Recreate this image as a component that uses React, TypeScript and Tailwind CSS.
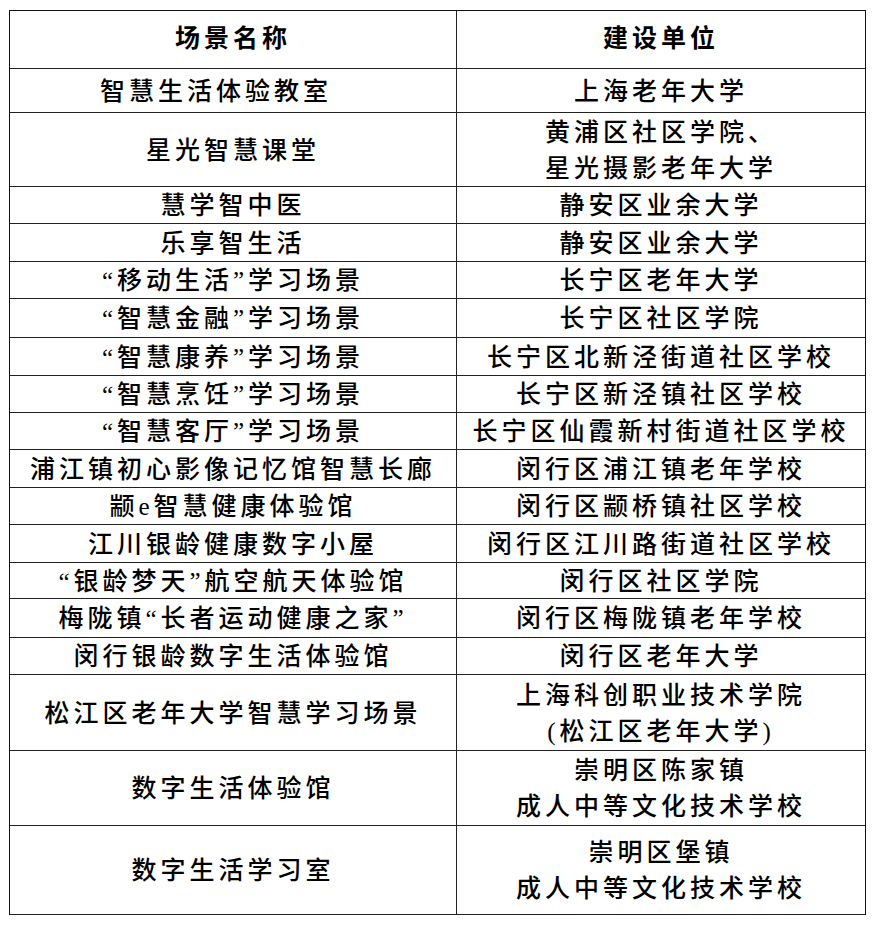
import React from "react";

interface Row {
  name: string;
  unit: string[];
  h: number;
  namePad?: string;
}

const rows: Row[] = [
  { name: "智慧生活体验教室", unit: ["上海老年大学"], h: 44, namePad: "pr-[34px]" },
  { name: "星光智慧课堂", unit: ["黄浦区社区学院、", "星光摄影老年大学"], h: 74 },
  { name: "慧学智中医", unit: ["静安区业余大学"], h: 37 },
  { name: "乐享智生活", unit: ["静安区业余大学"], h: 38 },
  { name: "“移动生活”学习场景", unit: ["长宁区老年大学"], h: 37 },
  { name: "“智慧金融”学习场景", unit: ["长宁区社区学院"], h: 39 },
  { name: "“智慧康养”学习场景", unit: ["长宁区北新泾街道社区学校"], h: 38 },
  { name: "“智慧烹饪”学习场景", unit: ["长宁区新泾镇社区学校"], h: 37 },
  { name: "“智慧客厅”学习场景", unit: ["长宁区仙霞新村街道社区学校"], h: 37 },
  { name: "浦江镇初心影像记忆馆智慧长廊", unit: ["闵行区浦江镇老年学校"], h: 38 },
  { name: "颛e智慧健康体验馆", unit: ["闵行区颛桥镇社区学校"], h: 37 },
  { name: "江川银龄健康数字小屋", unit: ["闵行区江川路街道社区学校"], h: 38 },
  { name: "“银龄梦天”航空航天体验馆", unit: ["闵行区社区学院"], h: 36 },
  { name: "梅陇镇“长者运动健康之家”", unit: ["闵行区梅陇镇老年学校"], h: 39 },
  { name: "闵行银龄数字生活体验馆", unit: ["闵行区老年大学"], h: 37 },
  { name: "松江区老年大学智慧学习场景", unit: ["上海科创职业技术学院", "(松江区老年大学)"], h: 76 },
  { name: "数字生活体验馆", unit: ["崇明区陈家镇", "成人中等文化技术学校"], h: 75 },
  { name: "数字生活学习室", unit: ["崇明区堡镇", "成人中等文化技术学校"], h: 89 },
];

const font = { fontFamily: '"Liberation Serif", "Noto Sans CJK SC", serif' };

export default function App() {
  return (
    <div className="w-[872px] h-[925px] bg-white pt-[10px] pl-[9px]" style={font}>
      <div className="w-[857px] border-t border-l border-r border-[#111] text-black text-[25px] tracking-[4px]">
        {/* header */}
        <div className="flex h-[58px] border-b border-[#222]">
          <div className="w-[447px] border-r border-[#222] flex items-center justify-center font-bold pb-[2px]">
            场景名称
          </div>
          <div className="flex-1 flex items-center justify-center font-bold pb-[2px]">
            建设单位
          </div>
        </div>

        {rows.map((r, i) => (
          <div
            key={i}
            className="flex border-b border-[#222]"
            style={{ height: r.h }}
          >
            <div
              className={`w-[447px] border-r border-[#222] flex items-center justify-center leading-[36px] font-medium pt-[2px] ${r.namePad || ""}`}
            >
              {r.name}
            </div>
            <div className="flex-1 flex flex-col items-center justify-center leading-[36px] font-medium pt-[2px]">
              {r.unit.map((u) => (
                <span key={u}>{u}</span>
              ))}
            </div>
          </div>
        ))}
      </div>
    </div>
  );
}
